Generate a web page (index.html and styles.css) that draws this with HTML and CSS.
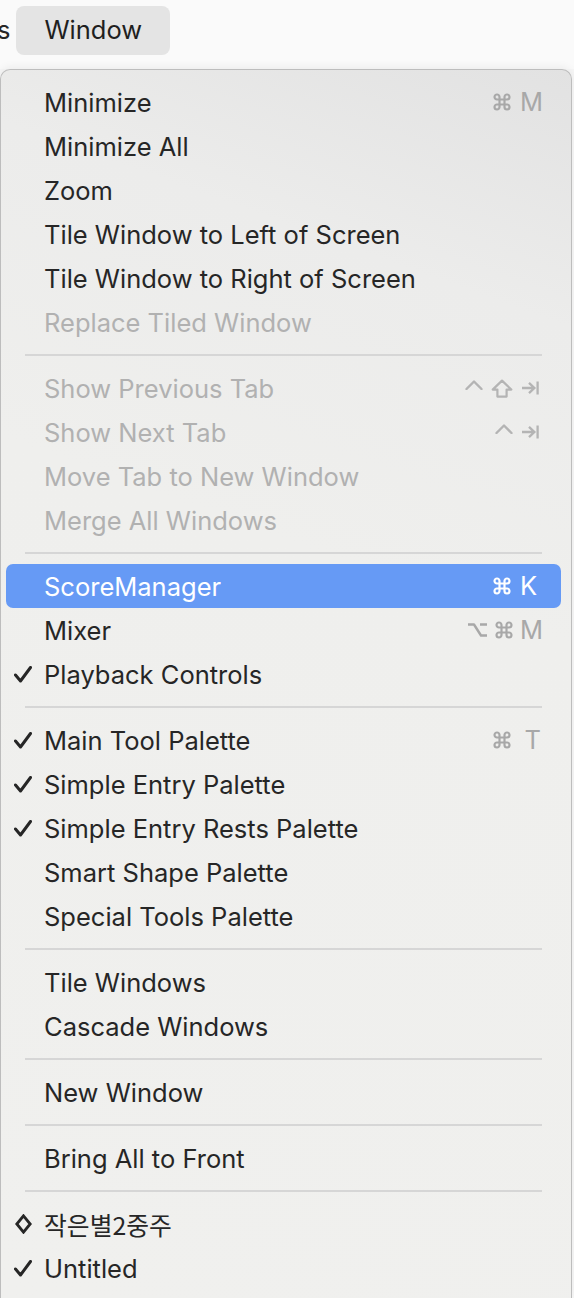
FILE: index.html
```html
<!DOCTYPE html>
<html>
<head>
<meta charset="utf-8">
<link rel="stylesheet" href="styles.css">
</head>
<body>
<div class="topbar">
  <span class="prev">s</span>
  <span class="title">Window</span>
</div>
<div class="menu">
  <div class="item"><span class="mark"></span><span class="label">Minimize</span><span class="keys"><svg class="ic cmd" viewBox="0 0 24 24"><path d="M18 3a3 3 0 0 0-3 3v12a3 3 0 0 0 3 3 3 3 0 0 0 3-3 3 3 0 0 0-3-3H6a3 3 0 0 0-3 3 3 3 0 0 0 3 3 3 3 0 0 0 3-3V6a3 3 0 0 0-3-3 3 3 0 0 0-3 3 3 3 0 0 0 3 3h12a3 3 0 0 0 3-3 3 3 0 0 0-3-3z"/></svg><span class="k">M</span></span></div>
  <div class="item"><span class="mark"></span><span class="label">Minimize All</span></div>
  <div class="item"><span class="mark"></span><span class="label">Zoom</span></div>
  <div class="item"><span class="mark"></span><span class="label">Tile Window to Left of Screen</span></div>
  <div class="item"><span class="mark"></span><span class="label">Tile Window to Right of Screen</span></div>
  <div class="item disabled"><span class="mark"></span><span class="label">Replace Tiled Window</span></div>
  <div class="sep"></div>
  <div class="item disabled"><span class="mark"></span><span class="label">Show Previous Tab</span><span class="keys tabkeys"><svg class="ic ctrl" viewBox="0 0 18 10"><polyline points="1.5,9 9,1.5 16.5,9"/></svg><svg class="ic shift" viewBox="0 0 22 19"><polygon points="11,1.6 20.3,10.6 15.6,10.6 15.6,17.6 6.4,17.6 6.4,10.6 1.7,10.6"/></svg><svg class="ic tab" viewBox="0 0 18 14"><path d="M1 7H13M8 1.8L13.4 7 8 12.2M16.6 0.5V13.5"/></svg></span></div>
  <div class="item disabled"><span class="mark"></span><span class="label">Show Next Tab</span><span class="keys tabkeys"><svg class="ic ctrl" viewBox="0 0 18 10"><polyline points="1.5,9 9,1.5 16.5,9"/></svg><svg class="ic tab" viewBox="0 0 18 14"><path d="M1 7H13M8 1.8L13.4 7 8 12.2M16.6 0.5V13.5"/></svg></span></div>
  <div class="item disabled"><span class="mark"></span><span class="label">Move Tab to New Window</span></div>
  <div class="item disabled"><span class="mark"></span><span class="label">Merge All Windows</span></div>
  <div class="sep"></div>
  <div class="item active"><span class="mark"></span><span class="label">ScoreManager</span><span class="keys"><svg class="ic cmd" viewBox="0 0 24 24"><path d="M18 3a3 3 0 0 0-3 3v12a3 3 0 0 0 3 3 3 3 0 0 0 3-3 3 3 0 0 0-3-3H6a3 3 0 0 0-3 3 3 3 0 0 0 3 3 3 3 0 0 0 3-3V6a3 3 0 0 0-3-3 3 3 0 0 0-3 3 3 3 0 0 0 3 3h12a3 3 0 0 0 3-3 3 3 0 0 0-3-3z"/></svg><span class="k">K</span></span></div>
  <div class="item"><span class="mark"></span><span class="label">Mixer</span><span class="keys tight"><svg class="ic opt" viewBox="0 0 21 16"><path d="M1 2.5H7L14 13.5H20M13 2.5H20"/></svg><svg class="ic cmd" viewBox="0 0 24 24"><path d="M18 3a3 3 0 0 0-3 3v12a3 3 0 0 0 3 3 3 3 0 0 0 3-3 3 3 0 0 0-3-3H6a3 3 0 0 0-3 3 3 3 0 0 0 3 3 3 3 0 0 0 3-3V6a3 3 0 0 0-3-3 3 3 0 0 0-3 3 3 3 0 0 0 3 3h12a3 3 0 0 0 3-3 3 3 0 0 0-3-3z"/></svg><span class="k">M</span></span></div>
  <div class="item"><span class="mark"><svg class="check" viewBox="0 0 18 17"><polyline points="1.5,9 6.5,15 16.5,1.5"/></svg></span><span class="label">Playback Controls</span></div>
  <div class="sep"></div>
  <div class="item"><span class="mark"><svg class="check" viewBox="0 0 18 17"><polyline points="1.5,9 6.5,15 16.5,1.5"/></svg></span><span class="label">Main Tool Palette</span><span class="keys"><svg class="ic cmd" viewBox="0 0 24 24"><path d="M18 3a3 3 0 0 0-3 3v12a3 3 0 0 0 3 3 3 3 0 0 0 3-3 3 3 0 0 0-3-3H6a3 3 0 0 0-3 3 3 3 0 0 0 3 3 3 3 0 0 0 3-3V6a3 3 0 0 0-3-3 3 3 0 0 0-3 3 3 3 0 0 0 3 3h12a3 3 0 0 0 3-3 3 3 0 0 0-3-3z"/></svg><span class="k kt">T</span></span></div>
  <div class="item"><span class="mark"><svg class="check" viewBox="0 0 18 17"><polyline points="1.5,9 6.5,15 16.5,1.5"/></svg></span><span class="label">Simple Entry Palette</span></div>
  <div class="item"><span class="mark"><svg class="check" viewBox="0 0 18 17"><polyline points="1.5,9 6.5,15 16.5,1.5"/></svg></span><span class="label">Simple Entry Rests Palette</span></div>
  <div class="item"><span class="mark"></span><span class="label">Smart Shape Palette</span></div>
  <div class="item"><span class="mark"></span><span class="label">Special Tools Palette</span></div>
  <div class="sep"></div>
  <div class="item"><span class="mark"></span><span class="label">Tile Windows</span></div>
  <div class="item"><span class="mark"></span><span class="label">Cascade Windows</span></div>
  <div class="sep"></div>
  <div class="item"><span class="mark"></span><span class="label">New Window</span></div>
  <div class="sep"></div>
  <div class="item"><span class="mark"></span><span class="label">Bring All to Front</span></div>
  <div class="sep"></div>
  <div class="item"><span class="mark"><svg class="diamond" viewBox="0 0 17 20"><polygon points="8.5,1.8 15.2,10 8.5,18.2 1.8,10"/></svg></span><span class="label kr">작은별2중주</span></div>
  <div class="item"><span class="mark"><svg class="check" viewBox="0 0 18 17"><polyline points="1.5,9 6.5,15 16.5,1.5"/></svg></span><span class="label">Untitled</span></div>
</div>
</body>
</html>
```
FILE: styles.css
```css
html, body {
  margin: 0;
  padding: 0;
  background: #f6f6f6;
  overflow: hidden;
}
body {
  width: 574px;
  height: 1298px;
  font-family: Inter, "Noto Sans", sans-serif;
  color: #262626;
}
.topbar {
  height: 69px;
  background: #fafafa;
  display: flex;
  align-items: flex-start;
  font-size: 25.5px;
  position: relative;
  z-index: 0;
}
.prev {
  margin-left: -3px;
  margin-top: 16px;
  line-height: 28px;
  color: #262626;
}
.title {
  margin-left: 6px;
  margin-top: 6px;
  width: 154px;
  height: 49px;
  box-sizing: border-box;
  padding-left: 28px;
  line-height: 48px;
  background: #e4e4e4;
  border-radius: 8px;
  color: #1f1f1f;
}
.menu {
  width: 572px;
  height: 1229px;
  box-sizing: border-box;
  border: 1px solid #bdbdbd;
  border-bottom: none;
  border-radius: 10px 10px 0 0;
  background: linear-gradient(200deg, #e2e2e2 0%, #ececeb 18%, #efefed 40%, #f0f0ee 100%);
  padding-top: 10px;
  box-shadow: 0 -2px 8px rgba(0,0,0,0.06);
  position: relative;
  z-index: 1;
  font-size: 25.5px;
}
.item {
  height: 44px;
  margin: 0 10px 0 5px;
  padding: 0 20px 0 8px;
  border-radius: 7px;
  display: flex;
  align-items: center;
}
.mark {
  width: 30px;
  display: flex;
  align-items: center;
}
.label {
  flex: 1;
  white-space: nowrap;
}
.kr {
  font-family: "Noto Sans CJK KR", sans-serif;
  font-size: 24.8px;
}
.disabled .label {
  color: #b1b1b1;
}
.keys {
  display: flex;
  align-items: center;
  gap: 8px;
  color: #a8a8a8;
}
.keys.tight {
  gap: 6px;
}
.tabkeys {
  gap: 8px;
  margin-right: 2px;
}
.ic {
  fill: none;
  stroke: #a8a8a8;
  stroke-linecap: round;
  stroke-linejoin: round;
}
.disabled .ic {
  stroke: #b4b4b4;
}
.active .ic {
  stroke: #fff;
}
.cmd {
  width: 20px;
  height: 20px;
  stroke-width: 2.6;
}
.ctrl {
  width: 18px;
  height: 10px;
  stroke-width: 2.4;
  margin-top: -6px;
}
.shift {
  width: 22px;
  height: 19px;
  stroke-width: 2.2;
}
.tab {
  width: 18px;
  height: 14px;
  stroke-width: 2.3;
  stroke-linecap: butt;
  stroke-linejoin: miter;
}
.opt {
  width: 21px;
  height: 16px;
  stroke-width: 2.4;
  stroke-linecap: butt;
}
.k {
  width: 21px;
  text-align: left;
  line-height: 1;
}
.k.kt {
  text-align: right;
}
.active {
  background: #669af5;
  color: #fff;
}
.active .keys {
  color: #fff;
}
.sep {
  height: 2px;
  margin: 10px 29px 10px 24px;
  background: #d6d6d6;
}
.check {
  width: 18px;
  height: 17px;
  fill: none;
  stroke: #262626;
  stroke-width: 3;
  stroke-linecap: round;
  stroke-linejoin: round;
}
.diamond {
  width: 17px;
  height: 20px;
  margin-left: 1px;
  fill: none;
  stroke: #262626;
  stroke-width: 2.8;
  stroke-linejoin: miter;
}
```
